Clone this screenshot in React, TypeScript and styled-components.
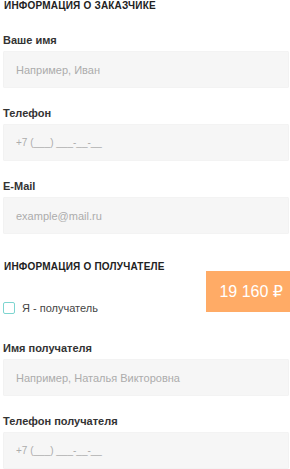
import styled, { createGlobalStyle } from "styled-components";

const GlobalStyle = createGlobalStyle`
  html, body {
    margin: 0;
    padding: 0;
    background: #fff;
  }
  body {
    font-family: "Liberation Sans", Arial, sans-serif;
    color: #2b2b2b;
  }
`;

const fields1 = [
  { label: "Ваше имя", placeholder: "Например, Иван" },
  { label: "Телефон", placeholder: "+7 (___) ___-__-__", small: true },
  { label: "E-Mail", placeholder: "example@mail.ru" },
];

const fields2 = [
  { label: "Имя получателя", placeholder: "Например, Наталья Викторовна" },
  { label: "Телефон получателя", placeholder: "+7 (___) ___-__-__", small: true },
];

const App = () => {
  return (
    <Wrapper>
      <GlobalStyle />
      <Section>
        <Heading>Информация о заказчике</Heading>
        {fields1.map((f) => (
          <Field key={f.label}>
            <Label>{f.label}</Label>
            <Input placeholder={f.placeholder} $small={f.small} />
          </Field>
        ))}
      </Section>
      <Section>
        <Heading>Информация о получателе</Heading>
        <CheckRow>
          <CheckBox type='checkbox' />
          <span>Я - получатель</span>
        </CheckRow>
        {fields2.map((f) => (
          <Field key={f.label}>
            <Label>{f.label}</Label>
            <Input placeholder={f.placeholder} $small={f.small} />
          </Field>
        ))}
      </Section>
      <Price>19 160 ₽</Price>
    </Wrapper>
  );
};

const Wrapper = styled.div`
  position: relative;
  width: 290px;
  height: 469px;
  overflow: hidden;
  padding: 0 1px 0 3px;
  box-sizing: border-box;
`;

const Section = styled.div`
  display: flex;
  flex-direction: column;
  & + & {
    margin-top: 27px;
  }
`;

const Heading = styled.h3`
  margin: 0 0 22px 1px;
  font-size: 10px;
  line-height: 12px;
  font-weight: 700;
  letter-spacing: 0.2px;
  text-transform: uppercase;
  color: #222;
`;

const Field = styled.div`
  display: flex;
  flex-direction: column;
  & + & {
    margin-top: 19px;
  }
`;

const Label = styled.label`
  font-size: 11px;
  line-height: 13px;
  font-weight: 700;
  color: #333;
  margin-bottom: 4px;
`;

const Input = styled.input<{ $small?: boolean }>`
  height: 37px;
  box-sizing: border-box;
  border: none;
  outline: none;
  border-radius: 2px;
  background: #f6f6f6;
  box-shadow: 0 0 0 0.5px #efefef inset;
  padding: 0 13px;
  font-family: "Liberation Sans", Arial, sans-serif;
  font-size: ${({ $small }) => ($small ? "10px" : "11px")};
  &::placeholder {
    color: #acacac;
  }
`;

const CheckRow = styled.label`
  display: flex;
  align-items: center;
  gap: 7px;
  margin: 7px 0 28px;
  font-size: 11px;
  color: #444;
`;

const CheckBox = styled.input`
  appearance: none;
  margin: 0;
  width: 12px;
  height: 12px;
  border: 1px solid #7dd5d0;
  border-radius: 2px;
  background: #fff;
`;

const Price = styled.div`
  position: absolute;
  top: 271px;
  right: 0;
  width: 84px;
  height: 41px;
  box-sizing: border-box;
  padding-right: 7px;
  display: flex;
  align-items: center;
  justify-content: flex-end;
  background: #ffab66;
  color: #fff;
  font-family: "Liberation Sans", "DejaVu Sans", sans-serif;
  font-size: 16px;
  font-weight: 400;
`;

export default App;
